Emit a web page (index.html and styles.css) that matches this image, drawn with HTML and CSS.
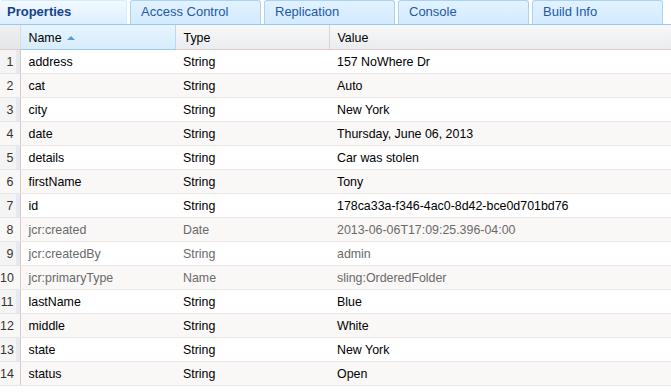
FILE: index.html
```html
<!DOCTYPE html>
<html>
<head>
<title>Properties</title>
<link rel="stylesheet" href="styles.css">
</head>
<body>

<div class="tabs">
  <div class="tab active">Properties</div>
  <div class="tab">Access Control</div>
  <div class="tab">Replication</div>
  <div class="tab">Console</div>
  <div class="tab">Build Info</div>
</div>

<table class="grid">
  <colgroup>
    <col class="c-num">
    <col class="c-name">
    <col class="c-type">
    <col>
  </colgroup>
  <thead>
    <tr>
      <th class="num"></th>
      <th class="sorted">Name <span class="arrow"></span></th>
      <th>Type</th>
      <th class="last">Value</th>
    </tr>
  </thead>
  <tbody>
    <tr><td class="num">1</td><td>address</td><td>String</td><td>157 NoWhere Dr</td></tr>
    <tr class="alt"><td class="num">2</td><td>cat</td><td>String</td><td>Auto</td></tr>
    <tr><td class="num">3</td><td>city</td><td>String</td><td>New York</td></tr>
    <tr class="alt"><td class="num">4</td><td>date</td><td>String</td><td>Thursday, June 06, 2013</td></tr>
    <tr><td class="num">5</td><td>details</td><td>String</td><td>Car was stolen</td></tr>
    <tr class="alt"><td class="num">6</td><td>firstName</td><td>String</td><td>Tony</td></tr>
    <tr><td class="num">7</td><td>id</td><td>String</td><td>178ca33a-f346-4ac0-8d42-bce0d701bd76</td></tr>
    <tr class="alt sys"><td class="num">8</td><td>jcr:created</td><td>Date</td><td>2013-06-06T17:09:25.396-04:00</td></tr>
    <tr class="sys"><td class="num">9</td><td>jcr:createdBy</td><td>String</td><td>admin</td></tr>
    <tr class="alt sys"><td class="num">10</td><td>jcr:primaryType</td><td>Name</td><td>sling:OrderedFolder</td></tr>
    <tr><td class="num">11</td><td>lastName</td><td>String</td><td>Blue</td></tr>
    <tr class="alt"><td class="num">12</td><td>middle</td><td>String</td><td>White</td></tr>
    <tr><td class="num">13</td><td>state</td><td>String</td><td>New York</td></tr>
    <tr class="alt"><td class="num">14</td><td>status</td><td>String</td><td>Open</td></tr>
  </tbody>
</table>

</body>
</html>
```

FILE: styles.css
```css
body{margin:0;padding:0;background:#fff;font-family:"Liberation Sans",Arial,sans-serif;font-size:12px;color:#000;}

.tabs{display:flex;gap:3px;height:24px;border-bottom:1px solid #99c9f2;background:#fff;}
.tab{box-sizing:border-box;width:131px;height:24px;padding:3px 0 0 10px;font-size:13px;color:#2559a5;
  border:1px solid #a9d2f5;border-bottom:none;border-radius:3px 3px 0 0;
  background:linear-gradient(#e2f2ff,#d2ebff);}
.tab.active{width:127px;padding-left:7px;font-weight:bold;color:#15428b;border-color:#d6ebfb;border-left:none;
  background:linear-gradient(#f2f9ff,#dcefff);}

.grid{border-collapse:collapse;table-layout:fixed;width:100%;font-size:12.4px;}
.c-num{width:20px;}
.c-name{width:155px;}
.c-type{width:154px;}

.grid tr{height:24px;}
.grid th{padding:2px 0 0 8px;text-align:left;font-weight:normal;
  background:linear-gradient(#f8f8f8,#eaecef);border-right:1px solid #dcd2d2;border-bottom:1px solid #e0cccc;}
.grid th.num{padding:0;background:linear-gradient(#f0f0f0,#e4e6e8);border-right:1px solid #dcdcdc;}
.grid th.sorted{background:linear-gradient(#e8f4fd,#d6ecfc);border-bottom:1px solid #99ccee;border-right:1px solid #b6daf4;}
.grid th.last{border-right:none;}
.arrow{display:inline-block;width:0;height:0;margin-left:2px;vertical-align:2px;
  border-left:4px solid transparent;border-right:4px solid transparent;border-bottom:4px solid #5a9ad6;}

.grid td{padding:2px 0 0 8px;border-bottom:1px solid #ede4e4;white-space:nowrap;overflow:hidden;}
.grid tr.alt td{background:#faf7f7;}
.grid td.num{padding:2px 6px 0 0;text-align:right;color:#333;
  background:linear-gradient(90deg,#f4f4f4 0,#f4f4f4 16px,#e6e9ee 16px,#e6e9ee 19px);
  border-right:1px solid #d8c8c8;border-bottom:1px solid #e6e6e6;}
.grid tr.sys td{color:#6a6a6a;}
.grid tr.sys td.num{color:#333;}
```
